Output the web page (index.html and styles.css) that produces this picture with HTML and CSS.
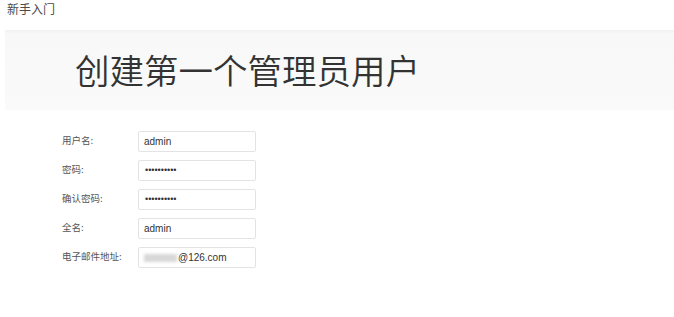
FILE: index.html
```html
<!DOCTYPE html>
<html lang="zh-CN">
<head>
<meta charset="utf-8">
<title>新手入门</title>
<link rel="stylesheet" href="styles.css">
</head>
<body>
<div class="topbar">新手入门</div>
<div class="banner">
  <h1 class="title">创建第一个管理员用户</h1>
</div>
<form class="form">
  <div class="row">
    <label class="label">用户名:</label>
    <div class="input">admin</div>
  </div>
  <div class="row">
    <label class="label">密码:</label>
    <div class="input dots">••••••••••</div>
  </div>
  <div class="row">
    <label class="label">确认密码:</label>
    <div class="input dots">••••••••••</div>
  </div>
  <div class="row">
    <label class="label">全名:</label>
    <div class="input">admin</div>
  </div>
  <div class="row">
    <label class="label">电子邮件地址:</label>
    <div class="input"><span class="blur"></span>@126.com</div>
  </div>
</form>
</body>
</html>
```

FILE: styles.css
```css
html, body {
  margin: 0;
  padding: 0;
  background: #ffffff;
  font-family: "Liberation Sans", "Noto Sans CJK SC", sans-serif;
  color: #444;
}
.topbar {
  padding: 2px 0 0 7px;
  height: 14px;
  font-size: 12px;
  line-height: 14px;
  color: #4a4a4a;
  font-family: "Noto Sans CJK SC", sans-serif;
}
.banner {
  margin: 14px 0 0 5px;
  height: 80px;
  background: linear-gradient(to bottom, #f1f1f1 0px, #f8f8f8 4px, #fafafa 100%);
  display: flex;
  align-items: center;
  padding-left: 70px;
}
.title {
  margin: 0;
  font-family: "Noto Sans CJK SC", sans-serif;
  font-weight: 350;
  font-size: 34.5px;
  line-height: 40px;
  color: #333;
  position: relative;
  top: -1px;
}
.form {
  margin: 21px 0 0 62px;
  display: flex;
  flex-direction: column;
  gap: 8px;
}
.row {
  display: flex;
  align-items: center;
  height: 21px;
}
.label {
  width: 76px;
  font-family: "Noto Sans CJK SC", sans-serif;
  font-size: 9.5px;
  color: #555;
  position: relative;
  top: -2px;
}
.input {
  box-sizing: border-box;
  width: 118px;
  height: 21px;
  border: 1px solid #e3e3e3;
  border-radius: 2px;
  background: #fff;
  padding-left: 5px;
  font-family: "Liberation Sans", sans-serif;
  font-size: 10px;
  line-height: 19px;
  color: #333;
  display: flex;
  align-items: center;
}
.dots {
  font-size: 9px;
  padding-left: 6px;
  color: #333;
}
.blur {
  display: inline-block;
  width: 33px;
  height: 8px;
  margin-right: 1px;
  background: #d8d8d8;
  filter: blur(1.5px);
}
```
